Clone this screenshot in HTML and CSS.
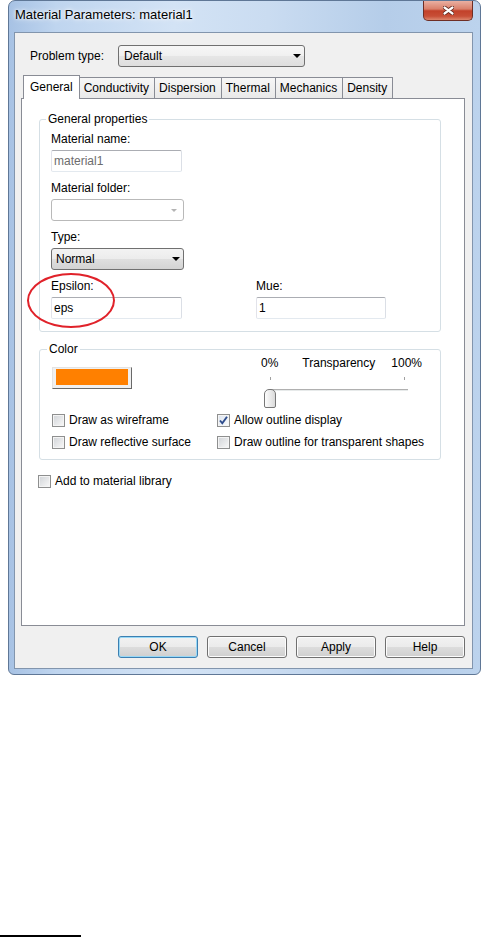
FILE: index.html
```html
<!DOCTYPE html>
<html>

<head>
	<title>Material Parameters</title>
	<link rel="stylesheet" href="styles.css">
</head>

<body>
	<div class="window">
		<div class="titlebar">
			<span class="title">Material Parameters: material1</span>
			<div class="close-btn">
				<svg width="11" height="9" viewBox="0 0 11 9">
					<path d="M1.5 1.5 L9.5 7.5 M9.5 1.5 L1.5 7.5" stroke="#5b2219" stroke-width="4" stroke-linecap="round" fill="none" />
					<path d="M1.5 1.5 L9.5 7.5 M9.5 1.5 L1.5 7.5" stroke="#fff" stroke-width="2.2" stroke-linecap="round" fill="none" />
				</svg>
			</div>
		</div>

		<div class="client">
			<div class="problem-row">
				<span class="problem-label">Problem type:</span>
				<div class="combo combo-problem"><span>Default</span><span class="arrow"></span></div>
			</div>

			<div class="tabs">
				<div class="tab tab-active">General</div>
				<div class="tab">Conductivity</div>
				<div class="tab">Dispersion</div>
				<div class="tab">Thermal</div>
				<div class="tab">Mechanics</div>
				<div class="tab">Density</div>
			</div>

			<div class="tab-panel">
				<div class="group group-general">
					<div class="group-title">General properties</div>

					<div class="field field-first">
						<label>Material name:</label>
						<div class="textbox textbox-disabled">material1</div>
					</div>
					<div class="field">
						<label>Material folder:</label>
						<div class="combo combo-disabled"><span></span><span class="arrow"></span></div>
					</div>
					<div class="field">
						<label>Type:</label>
						<div class="combo combo-type"><span>Normal</span><span class="arrow"></span></div>
					</div>
					<div class="field-row">
						<div class="field field-eps">
							<div class="highlight"></div>
							<label>Epsilon:</label>
							<div class="textbox">eps</div>
						</div>
						<div class="field">
							<label>Mue:</label>
							<div class="textbox textbox-mue">1</div>
						</div>
					</div>
				</div>

				<div class="group group-color">
					<div class="group-title">Color</div>
					<div class="color-top">
						<div class="color-btn"><div class="swatch"></div></div>
						<div class="slider">
							<div class="slider-labels"><span>0%</span><span class="slider-name">Transparency</span><span class="slider-max">100%</span></div>
							<div class="slider-ticks"><span></span><span></span></div>
							<div class="slider-track">
								<div class="groove"></div>
								<div class="slider-thumb"></div>
							</div>
						</div>
					</div>
					<div class="check-grid">
						<div class="check"><span class="box"></span>Draw as wireframe</div>
						<div class="check">
							<span class="box box-checked">
								<svg width="11" height="11" viewBox="0 0 11 11">
									<path d="M2 5.5 L4.3 8.3 L9 1.8" stroke="#2e4c8c" stroke-width="1.9" fill="none" />
								</svg>
							</span>Allow outline display
						</div>
						<div class="check"><span class="box"></span>Draw reflective surface</div>
						<div class="check"><span class="box"></span>Draw outline for transparent shapes</div>
					</div>
				</div>

				<div class="check check-library"><span class="box"></span>Add to material library</div>
			</div>

			<div class="buttons">
				<button class="btn btn-default">OK</button>
				<button class="btn">Cancel</button>
				<button class="btn">Apply</button>
				<button class="btn">Help</button>
			</div>
		</div>
	</div>

	<div class="footnote-rule"></div>
</body>

</html>
```

FILE: styles.css
```css
body {
	margin: 0;
	background-color: #fff;
	font-family: "Liberation Sans", Arial, sans-serif;
	font-size: 12px;
	line-height: 16px;
	color: #000;
}

/* window frame */
.window {
	width: 473px;
	margin-left: 8px;
	box-sizing: border-box;
	border: 1px solid #5f7796;
	border-radius: 7px 7px 6px 6px;
	padding: 0 7px 5px 5px;
	background: linear-gradient(to right, #a7c2e4 0%, #bfd5ef 10%, #d3e3f5 35%, #cadcf1 55%, #b5cde9 80%, #bcd3ed 100%);
}

.titlebar {
	display: flex;
	justify-content: space-between;
	align-items: flex-start;
	height: 31px;
}

.title {
	margin: 6px 0 0 1px;
	font-size: 13px;
	text-shadow: 0 0 6px #fff, 0 0 3px #fff;
}

.close-btn {
	width: 50px;
	height: 20px;
	box-sizing: border-box;
	border: 1px solid #6e2e25;
	border-top: none;
	border-radius: 0 0 5px 5px;
	background: linear-gradient(#eab0a2 0%, #da806b 42%, #c2412a 52%, #c84f37 80%, #dc866d 100%);
	display: flex;
	align-items: center;
	justify-content: center;
}

.client {
	height: 637px;
	box-sizing: border-box;
	border: 1px solid #8295ad;
	background-color: #f0f0f0;
	padding: 12px 7px 0 6px;
	display: flex;
	flex-direction: column;
}

/* problem type */
.problem-row {
	display: flex;
	align-items: center;
}

.problem-label {
	width: 88px;
	margin-left: 9px;
}

.combo {
	height: 22px;
	box-sizing: border-box;
	border: 1px solid #707070;
	border-radius: 3px;
	background: linear-gradient(#f3f3f3, #ececec 50%, #dfdfdf 50%, #d3d3d3);
	display: flex;
	align-items: center;
	justify-content: space-between;
	padding: 0 3px 0 5px;
}

.combo-problem {
	width: 187px;
	background: linear-gradient(#f7f7f7, #f0f0f0 50%, #e6e6e6 50%, #dedede);
}

.combo-type {
	width: 133px;
	padding-left: 4px;
}

.combo-disabled {
	width: 133px;
	border-color: #b9b9b9;
	background: #fff;
}

.arrow {
	width: 0;
	height: 0;
	border-left: 4px solid transparent;
	border-right: 4px solid transparent;
	border-top: 4px solid #000;
}

.combo-disabled .arrow {
	border-left-width: 3px;
	border-right-width: 3px;
	border-top: 3px solid #b4b4b4;
	margin-right: 3px;
}

/* tabs */
.tabs {
	display: flex;
	align-items: flex-end;
	height: 23px;
	margin-top: 8px;
	padding-left: 2px;
}

.tab {
	height: 21px;
	box-sizing: border-box;
	padding: 1px 5px 0 4px;
	line-height: 19px;
	border: 1px solid #898c95;
	border-bottom: none;
	margin-left: -1px;
	background: linear-gradient(#f6f6f6, #e9e9e9);
}

.tab-active {
	height: 24px;
	margin-bottom: -1px;
	margin-left: 0;
	padding: 0 6px;
	line-height: 22px;
	background: #fff;
	position: relative;
	z-index: 1;
}

.tab-panel {
	height: 528px;
	box-sizing: border-box;
	border: 1px solid #898c95;
	background-color: #fff;
	padding: 20px 23px 0 17px;
}

/* group boxes */
.group {
	border: 1px solid #d5dfe5;
	border-radius: 3px;
	padding: 0 11px 12px;
}

.group-title {
	width: fit-content;
	margin: -9px 0 0 -5px;
	padding: 0 2px;
	background-color: #fff;
}

.field {
	margin-top: 8px;
}

.field-first {
	margin-top: 4px;
}

.field label {
	display: block;
	margin-bottom: 3px;
}

.field-row {
	display: flex;
	margin-top: 8px;
}

.field-row .field {
	margin-top: 0;
}

.field-eps {
	width: 205px;
	position: relative;
}

.highlight {
	position: absolute;
	left: -24px;
	top: -5px;
	width: 88px;
	height: 55px;
	box-sizing: border-box;
	border: 2px solid #e0222a;
	border-radius: 50%;
}

.textbox {
	width: 131px;
	height: 22px;
	box-sizing: border-box;
	border: 1px solid;
	border-color: #abadb3 #dbdfe6 #e3e9ef #e2e3ea;
	border-radius: 2px;
	padding: 0 2px;
	line-height: 20px;
}

.textbox-disabled {
	color: #6d6d6d;
}

.textbox-mue {
	width: 130px;
}

/* color */
.group-color {
	margin-top: 17px;
	padding: 0 11px 9px 12px;
}

.color-top {
	display: flex;
	align-items: flex-start;
	margin-top: -2px;
}

.color-btn {
	margin-top: 12px;
	width: 80px;
	height: 22px;
	box-sizing: border-box;
	border: 1px solid;
	border-color: #e3e3e3 #696969 #696969 #e3e3e3;
	padding: 1px 3px 3px;
	background-color: #f0f0f0;
}

.swatch {
	height: 100%;
	background-color: #ff8000;
}

.slider {
	margin-left: 129px;
	width: 161px;
}

.slider-labels {
	display: flex;
}

.slider-name {
	margin-left: 24px;
}

.slider-max {
	margin-left: auto;
}

.slider-ticks {
	display: flex;
	justify-content: space-between;
	height: 3px;
	margin-top: 6px;
	padding: 0 17px 0 9px;
}

.slider-ticks span {
	width: 1px;
	background-color: #a0a0a0;
}

.slider-track {
	position: relative;
	height: 19px;
	margin-top: 1px;
}

.groove {
	margin: 9px 0 0 9px;
	width: 138px;
	height: 1px;
	border-top: 1px solid #b0b0b0;
	border-bottom: 1px solid #fff;
	background-color: #e7eaea;
}

.slider-thumb {
	position: absolute;
	left: 3px;
	top: 0;
	width: 12px;
	height: 19px;
	box-sizing: border-box;
	border: 1px solid #777;
	border-radius: 5px 5px 2px 2px;
	background: linear-gradient(to right, #fdfdfd, #dadada);
}

/* checkboxes */
.check-grid {
	display: grid;
	grid-template-columns: 165px auto;
	row-gap: 6px;
	margin-top: 4px;
}

.check {
	display: flex;
	align-items: center;
}

.box {
	width: 13px;
	height: 13px;
	box-sizing: border-box;
	border: 1px solid #8e8f8f;
	box-shadow: inset 0 0 0 1px #f4f4f4;
	background: linear-gradient(135deg, #d0d3d7, #f9f9f9);
	margin-right: 4px;
	display: flex;
	align-items: center;
	justify-content: center;
}

.box-checked {
	background: linear-gradient(135deg, #dbe3ee, #fbfcfd);
}

.check-library {
	margin: 13px 0 0 -1px;
}

/* buttons */
.buttons {
	display: flex;
	justify-content: flex-end;
	gap: 9px;
	margin-top: 10px;
}

.btn {
	width: 80px;
	height: 22px;
	box-sizing: border-box;
	border: 1px solid #707070;
	border-radius: 3px;
	box-shadow: inset 0 0 0 1px #fcfcfc;
	background: linear-gradient(#f2f2f2, #ebebeb 50%, #dddddd 50%, #cfcfcf);
	font: inherit;
	color: #000;
	padding: 0;
}

.btn-default {
	border-color: #3c7fb1;
	box-shadow: inset 0 0 0 1px #98d8f6;
}

.footnote-rule {
	width: 81px;
	height: 2px;
	margin-top: 260px;
	background-color: #000;
}
```
